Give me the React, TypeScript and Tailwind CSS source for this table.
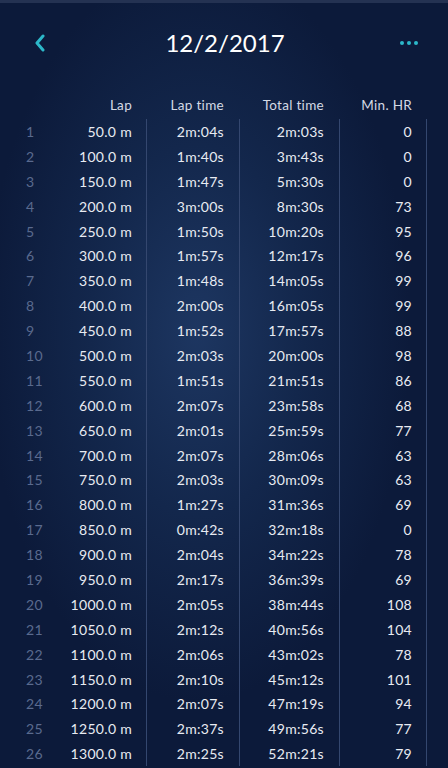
import React from "react";

const laps = [
  ["50.0 m", "2m:04s", "2m:03s", "0"],
  ["100.0 m", "1m:40s", "3m:43s", "0"],
  ["150.0 m", "1m:47s", "5m:30s", "0"],
  ["200.0 m", "3m:00s", "8m:30s", "73"],
  ["250.0 m", "1m:50s", "10m:20s", "95"],
  ["300.0 m", "1m:57s", "12m:17s", "96"],
  ["350.0 m", "1m:48s", "14m:05s", "99"],
  ["400.0 m", "2m:00s", "16m:05s", "99"],
  ["450.0 m", "1m:52s", "17m:57s", "88"],
  ["500.0 m", "2m:03s", "20m:00s", "98"],
  ["550.0 m", "1m:51s", "21m:51s", "86"],
  ["600.0 m", "2m:07s", "23m:58s", "68"],
  ["650.0 m", "2m:01s", "25m:59s", "77"],
  ["700.0 m", "2m:07s", "28m:06s", "63"],
  ["750.0 m", "2m:03s", "30m:09s", "63"],
  ["800.0 m", "1m:27s", "31m:36s", "69"],
  ["850.0 m", "0m:42s", "32m:18s", "0"],
  ["900.0 m", "2m:04s", "34m:22s", "78"],
  ["950.0 m", "2m:17s", "36m:39s", "69"],
  ["1000.0 m", "2m:05s", "38m:44s", "108"],
  ["1050.0 m", "2m:12s", "40m:56s", "104"],
  ["1100.0 m", "2m:06s", "43m:02s", "78"],
  ["1150.0 m", "2m:10s", "45m:12s", "101"],
  ["1200.0 m", "2m:07s", "47m:19s", "94"],
  ["1250.0 m", "2m:37s", "49m:56s", "77"],
  ["1300.0 m", "2m:25s", "52m:21s", "79"],
];

export default function App() {
  return (
    <main
      className="h-[768px] overflow-hidden bg-[#0c1a3a] bg-[radial-gradient(ellipse_at_44%_43%,#1d3661_0%,#13274c_30%,#0c1a3a_60%)] text-[#e8ebf2]"
      style={{ fontFamily: "Lato, 'Open Sans', sans-serif" }}
    >
      {/* TOP STRIP */}
      <div className="h-[3px] bg-[#243252]" />

      {/* HEADER */}
      <div className="flex items-center justify-between h-[80px] px-[30px]">
        <button className="w-[20px] h-[20px] flex items-center justify-center">
          <svg width="12" height="18" viewBox="0 0 12 18">
            <path d="M9 2 L3 9 L9 16" fill="none" stroke="#2cb8c9" strokeWidth="3" strokeLinecap="round" strokeLinejoin="round" />
          </svg>
        </button>
        <h1 className="text-[24px] text-white">12/2/2017</h1>
        <div className="flex gap-[3px]">
          <span className="w-[4px] h-[4px] rounded-full bg-[#2cb8c9]" />
          <span className="w-[4px] h-[4px] rounded-full bg-[#2cb8c9]" />
          <span className="w-[4px] h-[4px] rounded-full bg-[#2cb8c9]" />
        </div>
      </div>

      {/* COLUMN HEADERS */}
      <div className="flex h-[36px] items-end pb-[4px] text-[13.5px] tracking-[0.3px] text-[#d4d9e4]">
        <div className="w-[146px] pr-[14px] text-right">Lap</div>
        <div className="w-[93px] pr-[15px] text-right">Lap time</div>
        <div className="w-[100px] pr-[15px] text-right">Total time</div>
        <div className="w-[87px] pr-[14px] text-right">Min. HR</div>
      </div>

      {/* ROWS */}
      <div>
        {laps.map((l, i) => (
          <div key={i} className="flex h-[24.9px] items-center text-[14px] tracking-[0.3px]">
            <div className="w-[146px] pr-[14px] flex items-center h-full">
              <span className="w-[26px]" />
              <span className="w-[40px] text-[#5a6a8e]">{i + 1}</span>
              <span className="flex-1 text-right">{l[0]}</span>
            </div>
            <div className="w-[93px] pr-[15px] h-full flex items-center justify-end border-l border-[#34476f]">
              {l[1]}
            </div>
            <div className="w-[100px] pr-[15px] h-full flex items-center justify-end border-l border-[#34476f]">
              {l[2]}
            </div>
            <div className="w-[88px] pr-[14px] h-full flex items-center justify-end border-l border-r border-[#34476f]">
              {l[3]}
            </div>
          </div>
        ))}
      </div>
    </main>
  );
}
